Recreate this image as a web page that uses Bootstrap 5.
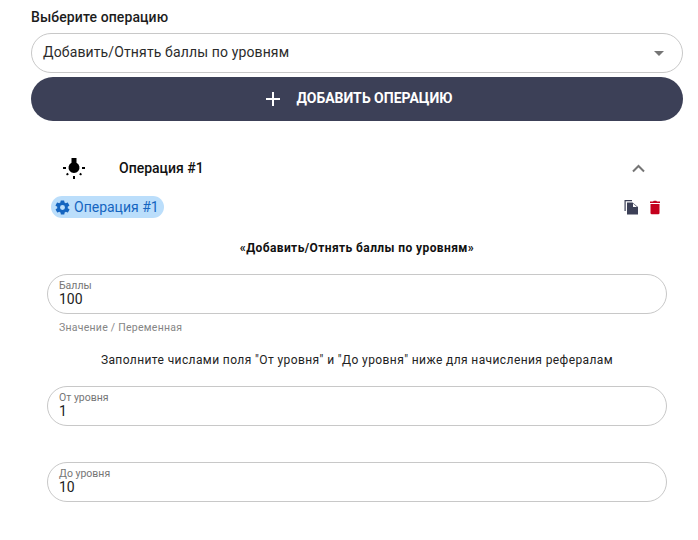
<!DOCTYPE html>
<html lang="ru">
<head>
  <meta charset="UTF-8" />
  <meta name="viewport" content="width=device-width, initial-scale=1" />
  <title>Операции</title>
  <link href="https://cdn.jsdelivr.net/npm/bootstrap@5.3.2/dist/css/bootstrap.min.css" rel="stylesheet" />
  <style>
    body {
      font-family: Roboto, "Liberation Sans", sans-serif;
      color: #000;
      background: #fff;
    }
    .page-wrap {
      padding: 9px 15px 0 31px;
    }
    .pick-label {
      font-size: 14px;
      line-height: 16px;
      font-weight: 500;
      letter-spacing: .1px;
      margin-bottom: 8px;
      color: #1c1c1c;
    }
    .pick-box {
      height: 40px;
      border: 1px solid #c8c8c8;
      border-radius: 20px;
      padding: 0 18px 2px 11px;
      font-size: 14px;
      letter-spacing: .13px;
      color: #2b2b2b;
    }
    .pick-caret {
      width: 0;
      height: 0;
      margin-top: 3px;
      border-left: 5px solid transparent;
      border-right: 5px solid transparent;
      border-top: 5px solid #757575;
    }
    .add-btn {
      height: 44px;
      margin-top: 4px;
      border: 0;
      padding: 0 0 1px 4px;
      width: 100%;
      border-radius: 22px;
      background: #3c4057;
      color: #fff;
      font-size: 14px;
      font-weight: 700;
      gap: 15px;
    }
    .op-head {
      margin-top: 26px;
      height: 42px;
      padding: 0 38px 0 31px;
    }
    .op-title {
      font-size: 14px;
      font-weight: 500;
      margin-left: 33px;
      color: #111;
    }
    .op-body {
      padding: 0 16px;
    }
    .op-bar {
      margin-top: 7px;
      padding: 0 0 0 4px;
      height: 22px;
    }
    .op-chip {
      height: 22px;
      border-radius: 11px;
      background: #bbdefb;
      color: #1565c0;
      font-size: 14px;
      padding: 0 5px 0 3px;
      gap: 3px;
    }
    .op-name {
      margin-top: 22px;
      font-size: 12px;
      line-height: 16px;
      font-weight: 700;
      letter-spacing: .4px;
      text-align: center;
      color: #111;
    }
    .num-field {
      height: 40px;
      border: 1px solid #c8c8c8;
      border-radius: 20px;
      padding: 5px 11px 0;
    }
    .num-label {
      font-size: 10.5px;
      line-height: 11px;
      color: #757575;
    }
    .num-value {
      font-size: 14px;
      line-height: 16px;
      color: #222;
    }
    .num-hint {
      font-size: 10.5px;
      line-height: 12px;
      letter-spacing: .25px;
      color: #858585;
      margin: 8px 0 0 12px;
    }
    .level-note {
      font-size: 12px;
      line-height: 16px;
      text-align: center;
      color: #222;
      letter-spacing: .4px;
      margin: 18px 0 18px;
    }
    .name-gap {
      margin-top: 18px;
    }
    .gap-top {
      margin-top: 36px;
    }
  </style>
</head>
<body>

<div class="page-wrap">
  <div class="pick-label">Выберите операцию</div>
  <div class="pick-box d-flex align-items-center justify-content-between">
    <span>Добавить/Отнять баллы по уровням</span>
    <span class="pick-caret"></span>
  </div>
  <button type="button" class="add-btn d-flex align-items-center justify-content-center">
    <svg width="16" height="16" viewBox="0 0 16 16"><path d="M7 1h2v6h6v2H9v6H7V9H1V7h6z" fill="#fff"/></svg>
    <span>ДОБАВИТЬ ОПЕРАЦИЮ</span>
  </button>

  <div class="op-head d-flex align-items-center">
    <!-- lamp icon -->
    <svg width="24" height="24" viewBox="0 0 24 24" fill="#000">
      <path d="M9.500 2h5v4.700a5.500 5.500 0 1 1-5 0z"/>
      <path d="M1 11h3v2H1zM20 11h3v2h-3zM11 20h2v3h-2zM4 18l1.800-1.200 1 1.600-1.800 1.200zM20 18l-1.800-1.200-1 1.600 1.800 1.200z"/>
    </svg>
    <span class="op-title flex-grow-1">Операция #1</span>
    <svg width="13" height="9" viewBox="0 0 13 9"><path d="M1 7.500 6.500 2 12 7.500" fill="none" stroke="#757575" stroke-width="2"/></svg>
  </div>

  <div class="op-body">
    <div class="op-bar d-flex align-items-center justify-content-between">
      <span class="op-chip d-inline-flex align-items-center">
        <svg width="17" height="17" viewBox="0 0 24 24"><path fill="#1565c0" d="M19.400 13a7.500 7.500 0 0 0 0-2l2.100-1.600a.5.5 0 0 0 .1-.6l-2-3.500a.5.5 0 0 0-.6-.2l-2.500 1a7.300 7.300 0 0 0-1.700-1l-.4-2.700a.5.5 0 0 0-.5-.4h-4a.5.5 0 0 0-.5.4l-.4 2.700a7.700 7.700 0 0 0-1.700 1l-2.500-1a.5.5 0 0 0-.6.2l-2 3.500a.5.5 0 0 0 .1.600L4.600 11a7.900 7.900 0 0 0 0 2l-2.100 1.600a.5.5 0 0 0-.1.600l2 3.500c.1.200.4.300.6.200l2.500-1c.5.400 1.100.7 1.700 1l.4 2.700c0 .2.200.4.500.4h4c.3 0 .5-.2.500-.4l.4-2.700a7.700 7.700 0 0 0 1.700-1l2.500 1c.2.100.5 0 .6-.2l2-3.500a.5.500 0 0 0-.1-.6zM12 15.500a3.500 3.500 0 1 1 0-7 3.500 3.500 0 0 1 0 7z"/></svg>
        Операция #1
      </span>
      <span class="d-flex align-items-center gap-2 pe-1">
        <svg width="16" height="16" viewBox="0 0 16 16"><path fill="#3c4057" d="M1.500 1H9v1.200H2.700V12H1.500z"/><path fill="#3c4057" d="M4 3.500h5.500L15 8v7.500H4z"/><path fill="#fff" d="M10 4.500V8h4z"/></svg>
        <svg width="16" height="16" viewBox="0 0 16 16"><path fill="#c4001d" d="M3.500 5h9v9a1.300 1.300 0 0 1-1.300 1.300H4.800A1.300 1.300 0 0 1 3.500 14zM3 2.500h3l.8-.8h2.400l.8.8h3V4H3z"/></svg>
      </span>
    </div>

    <div class="op-name">«Добавить/Отнять баллы по уровням»</div>

    <div class="num-field name-gap">
      <div class="num-label">Баллы</div>
      <div class="num-value">100</div>
    </div>
    <div class="num-hint">Значение / Переменная</div>

    <div class="level-note">Заполните числами поля "От уровня" и "До уровня" ниже для начисления рефералам</div>

    <div class="num-field">
      <div class="num-label">От уровня</div>
      <div class="num-value">1</div>
    </div>

    <div class="num-field gap-top">
      <div class="num-label">До уровня</div>
      <div class="num-value">10</div>
    </div>
  </div>
</div>

<script src="https://cdn.jsdelivr.net/npm/bootstrap@5.3.2/dist/js/bootstrap.bundle.min.js"></script>
</body>
</html>
